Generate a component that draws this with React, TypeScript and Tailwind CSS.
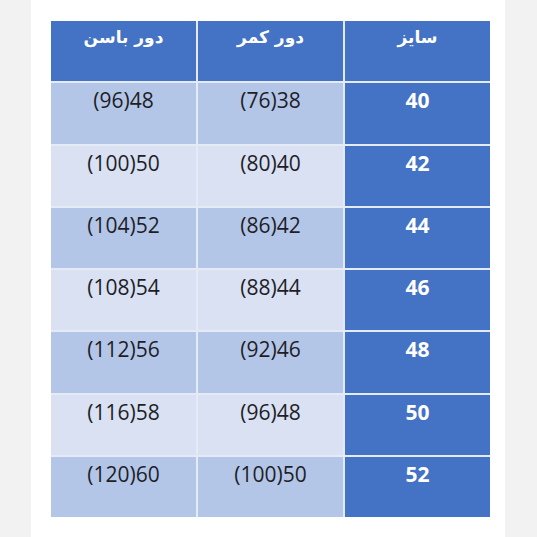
import React from 'react';

const rows = [
  { size: '40', waist: '(76)38', hip: '(96)48' },
  { size: '42', waist: '(80)40', hip: '(100)50' },
  { size: '44', waist: '(86)42', hip: '(104)52' },
  { size: '46', waist: '(88)44', hip: '(108)54' },
  { size: '48', waist: '(92)46', hip: '(112)56' },
  { size: '50', waist: '(96)48', hip: '(116)58' },
  { size: '52', waist: '(100)50', hip: '(120)60' },
];

export default function App() {
  return (
    <div className="w-[537px] h-[537px] bg-[#f2f2f2] flex">
      <div className="ml-[31px] w-[474px] h-full bg-white pt-[21px] pl-[20px]">
        <div className="w-[439px] h-[496px] grid grid-cols-3 grid-rows-8 gap-[2px] bg-[#e4ebf7] font-['Open_Sans','DejaVu_Sans',sans-serif] text-[21px]">
          <div className="bg-[#4472c4] text-white text-center pt-[4px] font-bold text-[17px] font-['DejaVu_Sans',sans-serif]" dir="rtl">دور باسن</div>
          <div className="bg-[#4472c4] text-white text-center pt-[4px] font-bold text-[17px] font-['DejaVu_Sans',sans-serif]" dir="rtl">دور کمر</div>
          <div className="bg-[#4472c4] text-white text-center pt-[4px] font-bold text-[17px] font-['DejaVu_Sans',sans-serif]" dir="rtl">سایز</div>
          {rows.map((r, i) => {
            const bg = i % 2 === 0 ? 'bg-[#b4c6e7]' : 'bg-[#d9e1f2]';
            return (
              <React.Fragment key={r.size}>
                <div className={`${bg} text-center text-[#1e1e28] pt-[2px]`}>{r.hip}</div>
                <div className={`${bg} text-center text-[#1e1e28] pt-[2px]`}>{r.waist}</div>
                <div className="bg-[#4472c4] text-center text-white font-bold text-[21px] pt-[2px]">{r.size}</div>
              </React.Fragment>
            );
          })}
        </div>
      </div>
    </div>
  );
}
